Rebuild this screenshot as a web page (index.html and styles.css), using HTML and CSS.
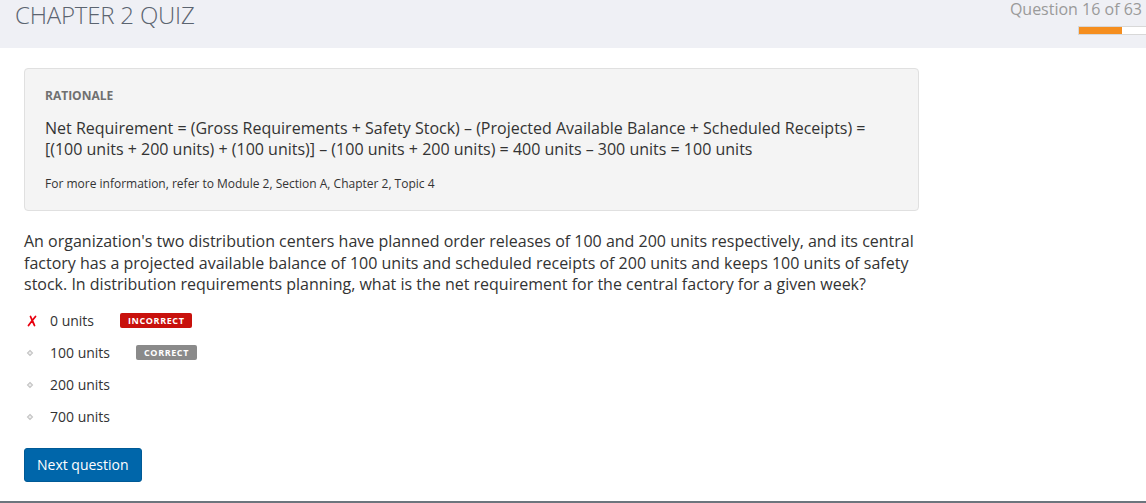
FILE: index.html
```html
<!DOCTYPE html>
<html>
<head>
<meta charset="utf-8">
<link rel="stylesheet" href="styles.css">
</head>
<body>
<header class="topbar">
  <h1 class="title">CHAPTER 2 QUIZ</h1>
  <div class="progress-wrap">
    <div class="qcount">Question 16 of 63</div>
    <div class="progress"><div class="progress-fill" style="width:64%"></div></div>
  </div>
</header>
<main class="content">
  <section class="rationale">
    <div class="rationale-label">RATIONALE</div>
    <p class="rationale-body">Net Requirement = (Gross Requirements + Safety Stock) – (Projected Available Balance + Scheduled Receipts) =<br>[(100 units + 200 units) + (100 units)] – (100 units + 200 units) = 400 units – 300 units = 100 units</p>
    <p class="rationale-ref">For more information, refer to Module 2, Section A, Chapter 2, Topic 4</p>
  </section>
  <p class="question">An organization's two distribution centers have planned order releases of 100 and 200 units respectively, and its central factory has a projected available balance of 100 units and scheduled receipts of 200 units and keeps 100 units of safety stock. In distribution requirements planning, what is the net requirement for the central factory for a given week?</p>
  <ul class="options">
    <li class="option">
      <span class="mark"><svg width="12" height="12" viewBox="0 0 12 12"><path d="M4.5 1.5 C5.5 4 7 7 8.5 10.5 M9.5 1.5 C7 4.5 5 7 2.5 10.5" stroke="#e8000f" stroke-width="1.8" stroke-linecap="round" fill="none"/></svg></span>
      <span class="opt-text">0 units</span>
      <span class="badge badge-incorrect">INCORRECT</span>
    </li>
    <li class="option">
      <span class="mark"><svg width="8" height="8" viewBox="0 0 8 8"><path d="M4 1.5 L6.5 4 L4 6.5 L1.5 4 Z" stroke="#c4c4c4" stroke-width="1.1" fill="#eee"/></svg></span>
      <span class="opt-text">100 units</span>
      <span class="badge badge-correct">CORRECT</span>
    </li>
    <li class="option">
      <span class="mark"><svg width="8" height="8" viewBox="0 0 8 8"><path d="M4 1.5 L6.5 4 L4 6.5 L1.5 4 Z" stroke="#c4c4c4" stroke-width="1.1" fill="#eee"/></svg></span>
      <span class="opt-text">200 units</span>
    </li>
    <li class="option">
      <span class="mark"><svg width="8" height="8" viewBox="0 0 8 8"><path d="M4 1.5 L6.5 4 L4 6.5 L1.5 4 Z" stroke="#c4c4c4" stroke-width="1.1" fill="#eee"/></svg></span>
      <span class="opt-text">700 units</span>
    </li>
  </ul>
  <button class="next-btn">Next question</button>
</main>
<div class="bottom-line"></div>
</body>
</html>
```

FILE: styles.css
```css
* { box-sizing: border-box; }
html, body { margin: 0; padding: 0; }
body {
  font-family: "Open Sans", "Noto Sans", sans-serif;
  color: #333;
  background: #fff;
  width: 1146px;
  height: 503px;
  overflow: hidden;
  display: flex;
  flex-direction: column;
}
.topbar {
  height: 48px;
  background: #eff0f5;
  display: flex;
  justify-content: space-between;
  align-items: flex-start;
  padding-left: 15px;
}
.title {
  margin: 0;
  font-size: 24px;
  font-weight: 300;
  line-height: 30px;
  color: #5b6470;
  letter-spacing: -0.2px;
}
.progress-wrap {
  display: flex;
  flex-direction: column;
  align-items: flex-end;
}
.qcount {
  font-size: 16px;
  line-height: 18px;
  color: #9a9a9a;
  padding-right: 4px;
}
.progress {
  margin-top: 8px;
  width: 68px;
  height: 9px;
  background: #fff;
  border: 1px solid #d8d8d8;
  border-right: none;
}
.progress-fill {
  height: 100%;
  background: #f58e1f;
}
.content {
  padding: 20px 0 0 24px;
  width: 919px;
  flex: 1;
}
.rationale {
  background: #f4f4f4;
  border: 1px solid #e0e0e0;
  border-radius: 4px;
  padding: 18px 20px 17px 20px;
}
.rationale-label {
  font-size: 12px;
  font-weight: 700;
  line-height: 18px;
  color: #707070;
}
.rationale-body {
  margin: 13px 0 0 0;
  font-size: 16px;
  line-height: 21px;
  color: #333;
}
.rationale-ref {
  margin: 15px 0 0 0;
  font-size: 12px;
  line-height: 18px;
  color: #333;
}
.question {
  margin: 20px 0 0 0;
  font-size: 16px;
  line-height: 21.5px;
  color: #333;
}
.options {
  list-style: none;
  margin: 9px 0 0 0;
  padding: 0;
}
.option {
  display: flex;
  align-items: center;
  height: 32px;
}
.mark {
  width: 26px;
  display: flex;
  justify-content: flex-start;
  padding-left: 2px;
}
.opt-text {
  font-size: 14px;
  color: #333;
}
.badge {
  margin-left: 26px;
  font-size: 9px;
  font-weight: 700;
  letter-spacing: 0.6px;
  color: #fff;
  height: 15px;
  line-height: 15px;
  padding: 0 8px;
  border-radius: 2px;
}
.badge-incorrect { background: #c8110c; }
.badge-correct { background: #8a8a8a; }
.next-btn {
  margin-top: 15px;
  font-family: "Open Sans", "Noto Sans", sans-serif;
  font-size: 14px;
  color: #fff;
  background: #0066aa;
  border: 1px solid #005a96;
  border-radius: 3px;
  height: 34px;
  padding: 0 12px;
  cursor: pointer;
}
.bottom-line {
  height: 2px;
  background: #6c757d;
}
```
